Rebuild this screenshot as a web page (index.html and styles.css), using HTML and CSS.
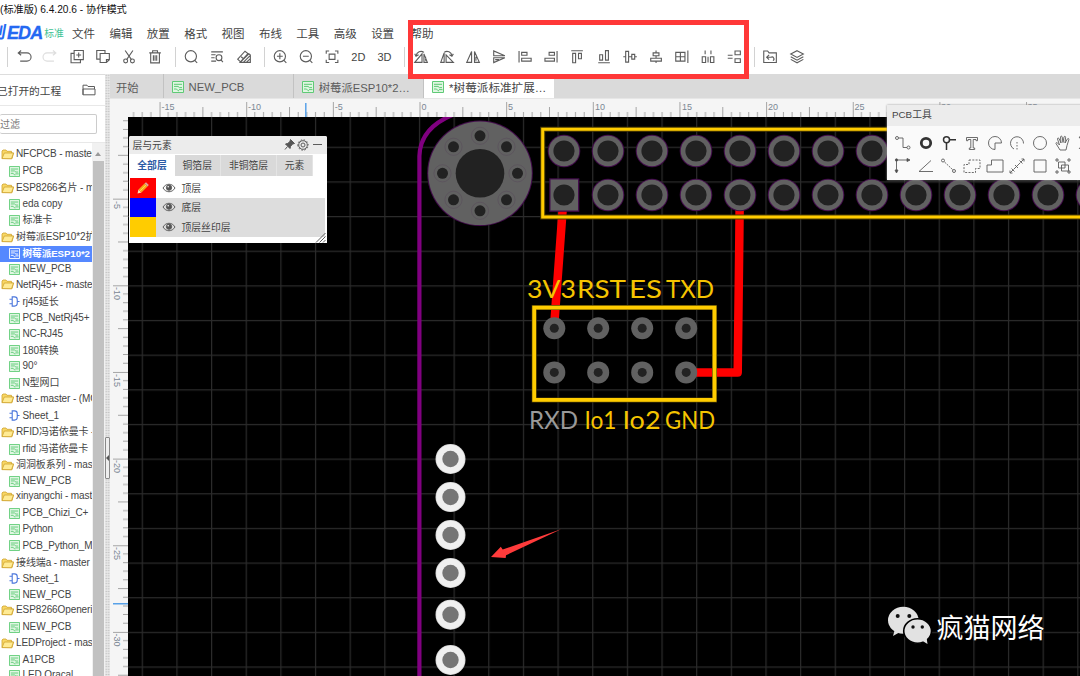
FILE: index.html
```html
<!DOCTYPE html>
<html lang="zh-CN">
<head>
<meta charset="utf-8">
<title>EDA</title>
<link rel="stylesheet" href="styles.css">
</head>
<body>
<svg class="defs" width="0" height="0">
  <symbol id="pcb" viewBox="0 0 12 12"><path class="pcb-bg" d="M.5.5h11v11H.5z"/><path d="M2 3.3h8M2 5.4h4l1.500 1.200H10M2 8h2.500l1.500 1.700h1M7 8.600h3.500"/></symbol>
  <symbol id="sheet" viewBox="0 0 12 12"><path d="M3.500 1h2.500a3 3 0 0 1 3 3v4a3 3 0 0 1-3 3H3.500zM3.500 3.500H.5M3.500 8.500H.5M9 6h2.500"/></symbol>
  <symbol id="folder" viewBox="0 0 13 11"><path d="M1 9.500V2l1-1h3l1 1.300h4.500V4H12.500l-1.500 5.700z" fill="#f8d765"/><path d="M1 9.600 3.300 4H12.500l-2 5.700z" fill="#ffeb94"/></symbol>
  <symbol id="eye" viewBox="0 0 14 10"><path d="M1 5c3-5 9-5 12 0-3 5-9 5-12 0z"/><circle cx="7" cy="4.700" r="2.600" fill="#555"/><circle cx="6.200" cy="3.800" r=".8" fill="#fff" stroke="none"/></symbol>
</svg>
<div class="app">
  <header class="header">
    <div class="title">(标准版) 6.4.20.6 - 协作模式</div>
    <nav class="menu">
      <div class="logo"><span class="logo-cut">创</span><b>EDA</b><small>标准</small></div>
      <span>文件</span><span>编辑</span><span>放置</span><span>格式</span><span>视图</span><span>布线</span><span>工具</span><span>高级</span><span>设置</span><span class="help">帮助</span>
    </nav>
    <div class="toolbar">
      <i class="sep"></i>
      <svg viewBox="0 0 16 16"><path d="M5 1.500 2 4l3 2.500M2 4h9a3.400 3.400 0 0 1 0 8.500H4"/></svg>
      <svg class="off" viewBox="0 0 16 16"><path d="m11 1.500 3 2.500-3 2.500M14 4H5a3.400 3.400 0 0 0 0 8.500h7"/></svg>
      <svg viewBox="0 0 16 16"><path d="M5 1.500h9.500V11H5zM5 4.500H1.800v9.700h9.700V11M9.700 3.700v5M7.200 6.200h5"/></svg>
      <svg viewBox="0 0 16 16"><path d="M4.500 10.500h-3v-9h8.500v3M5 4.700h9.500V11l-3 3H5zM14.500 11h-3v3"/></svg>
      <svg viewBox="0 0 16 16"><path d="m4 1.500 6.500 9.500M12 1.500 5.500 11"/><circle cx="4.500" cy="12.300" r="2"/><circle cx="11.500" cy="12.300" r="2"/></svg>
      <svg viewBox="0 0 16 16"><path d="M2 4h12M5.500 3.800v-2h5v2M3.500 4v10.300h9V4M6.300 6.500v5.500M8 6.500v5.500M9.700 6.500v5.500"/></svg>
      <i class="sep"></i>
      <svg viewBox="0 0 16 16"><circle cx="7.800" cy="7.500" r="5.800"/><path d="m11.800 11.800 2.500 2.500"/></svg>
      <svg viewBox="0 0 16 16"><path d="M2 3h12M2 6h4.500M2 9h3.500M2 12.500h5"/><circle cx="10" cy="9" r="3"/><path d="m12 11 2 2.500"/></svg>
      <svg viewBox="0 0 16 16"><path d="M1.500 10.500 9 2.300l3 2.500-7.700 8.400zM4 13.800l9-8.800 1.500 1.300v7.500zM7 14l7-7M10 14l4.500-4M5 8l3 2.600"/></svg>
      <i class="sep"></i>
      <svg viewBox="0 0 16 16"><circle cx="7.800" cy="7.500" r="5.800"/><path d="m12 11.800 2.500 2.500M7.800 4.500v6M4.800 7.500h6"/></svg>
      <svg viewBox="0 0 16 16"><circle cx="7.800" cy="7.500" r="5.800"/><path d="m12 11.800 2.500 2.500M4.800 7.500h6"/></svg>
      <svg viewBox="0 0 16 16"><path d="M2 5V2h3M11 2h3v3M14 11v3h-3M5 14H2v-3M5 5.300h6v5.400H5z"/></svg>
      <span>2D</span><span>3D</span>
      <i class="sep"></i>
      <svg viewBox="0 0 16 16"><path d="M1.500 13.800 9 5v8.800zM11 5l3.500 8.800H11zM12.700 8v4M3 7a5 5 0 0 1 8-3.500M1.500 5l1.300 2.500L5.500 6"/></svg>
      <svg viewBox="0 0 16 16"><path d="M1.500 13.800 5 4v9.800zM7 6l7.500 7.800H7zM5 3.500A5 5 0 0 1 13 7M10.500 6l2.500 1.500L14.500 5"/></svg>
      <svg viewBox="0 0 16 16"><path d="M6.500 2.500v11.300H1.500zM9.500 2.500v11.300h5zM11 8v4"/></svg>
      <svg viewBox="0 0 16 16"><path d="M2.500 2v5H14zM2.500 14V9H14zM4 11h4"/></svg>
      <svg viewBox="0 0 16 16"><path d="M1.800 2v12M4.500 3.500H10v3H4.500zM4.500 9.500h9.800v3H4.500z"/></svg>
      <svg viewBox="0 0 16 16"><path d="M14.200 2v12M6 3.500h5.500v3H6zM1.700 9.500h9.800v3H1.700z"/></svg>
      <svg viewBox="0 0 16 16"><path d="M2 1.800h12M3.500 4.500h3v9.700h-3zM9.500 4.500h3V10h-3z"/></svg>
      <svg viewBox="0 0 16 16"><path d="M2 14.200h12M3.500 6h3v5.500h-3zM9.500 1.700h3v9.800h-3z"/></svg>
      <svg viewBox="0 0 16 16"><path d="M3.500 2.500h3v11h-3zM9.800 5.500h3v5h-3zM1 8h2.500M6.500 8h3.300M12.800 8H15"/></svg>
      <svg viewBox="0 0 16 16"><path d="M5 4h6v3H5zM2.500 9.500h11v3h-11zM8 1.500V4M8 7v2.500M8 12.500v2"/></svg>
      <svg viewBox="0 0 16 16"><path d="M1.500 3.500h9.500v9H1.500zM6.300 3.500v9M1.500 8H11M14 1.500v13"/></svg>
      <svg viewBox="0 0 16 16"><path d="M2 8h3.500v6H2zM10.500 8h3.500v6h-3.500zM5 1.500v4M8 8v6M11 1.500v4"/></svg>
      <svg viewBox="0 0 16 16"><path d="M9 2h5.500v4H9zM9 10h5.500v4H9zM1.500 6.500h5M1.500 9.500h5"/></svg>
      <i class="sep"></i>
      <svg viewBox="0 0 16 16"><path d="M1.500 2h4l1.500 2h7.500v10h-13zM7 6 4.500 8.500 7 11M5 8.500h4a2 2 0 0 1 2 3.500"/></svg>
      <svg viewBox="0 0 16 16"><path d="m8 1.700 6.500 3.500L8 8.700 1.500 5.200zM1.500 8 8 11.500 14.500 8M1.500 10.700 8 14.200l6.500-3.500"/></svg>
    </div>
  </header>
  <div class="body">
    <aside class="side">
      <div class="side-head"><span>已打开的工程</span>
        <svg width="14" height="12" viewBox="0 0 14 12"><path d="M1 10.800V1.200h4l1 1.300h6.500V5M1 5h12v5.800H1z"/></svg></div>
      <div class="filter"><div class="input">过滤</div></div>
      <div class="tree-wrap">
        <ul class="tree">
          <li class="f"><svg><use href="#folder"/></svg>NFCPCB - master</li>
          <li><svg><use href="#pcb"/></svg>PCB</li>
          <li class="f"><svg><use href="#folder"/></svg>ESP8266名片 - m</li>
          <li><svg><use href="#pcb"/></svg>eda copy</li>
          <li><svg><use href="#pcb"/></svg>标准卡</li>
          <li class="f"><svg><use href="#folder"/></svg>树莓派ESP10*2扩</li>
          <li class="sel"><svg><use href="#pcb"/></svg>树莓派ESP10*2</li>
          <li><svg><use href="#pcb"/></svg>NEW_PCB</li>
          <li class="f"><svg><use href="#folder"/></svg>NetRj45+ - master</li>
          <li class="s"><svg><use href="#sheet"/></svg>rj45延长</li>
          <li><svg><use href="#pcb"/></svg>PCB_NetRj45+</li>
          <li><svg><use href="#pcb"/></svg>NC-RJ45</li>
          <li><svg><use href="#pcb"/></svg>180转换</li>
          <li><svg><use href="#pcb"/></svg>90°</li>
          <li><svg><use href="#pcb"/></svg>N型网口</li>
          <li class="f"><svg><use href="#folder"/></svg>test - master - (MC</li>
          <li class="s"><svg><use href="#sheet"/></svg>Sheet_1</li>
          <li class="f"><svg><use href="#folder"/></svg>RFID冯诺依曼卡 -</li>
          <li><svg><use href="#pcb"/></svg>rfid 冯诺依曼卡</li>
          <li class="f"><svg><use href="#folder"/></svg>洞洞板系列 - mas</li>
          <li><svg><use href="#pcb"/></svg>NEW_PCB</li>
          <li class="f"><svg><use href="#folder"/></svg>xinyangchi - mast</li>
          <li><svg><use href="#pcb"/></svg>PCB_Chizi_C+</li>
          <li><svg><use href="#pcb"/></svg>Python</li>
          <li><svg><use href="#pcb"/></svg>PCB_Python_M</li>
          <li class="f"><svg><use href="#folder"/></svg>接线端a - master</li>
          <li class="s"><svg><use href="#sheet"/></svg>Sheet_1</li>
          <li><svg><use href="#pcb"/></svg>NEW_PCB</li>
          <li class="f"><svg><use href="#folder"/></svg>ESP8266Openeri</li>
          <li><svg><use href="#pcb"/></svg>NEW_PCB</li>
          <li class="f"><svg><use href="#folder"/></svg>LEDProject - mas</li>
          <li><svg><use href="#pcb"/></svg>A1PCB</li>
          <li><svg><use href="#pcb"/></svg>LED Oracal</li>
        </ul>
        <div class="scroll"><i class="up"></i><i class="thumb"></i></div>
      </div>
    </aside>
    <div class="splitter"><i></i></div>
    <main class="main">
      <div class="tabs">
        <div class="tab start">开始</div>
        <div class="tab"><svg><use href="#pcb"/></svg>NEW_PCB</div>
        <div class="tab"><svg><use href="#pcb"/></svg>树莓派ESP10*2…</div>
        <div class="tab active"><svg><use href="#pcb"/></svg>*树莓派标准扩展…</div>
      </div>
      <div class="work">
        <svg class="stage" width="970" height="577" viewBox="110 99 970 577">
          <defs>
            <pattern id="hticks" x="419.500" y="99" width="86.650" height="18" patternUnits="userSpaceOnUse">
              <path class="tick" d="M.5 3v15M8.660 13v5M17.330 13v5M26 13v5M34.660 13v5M43.320 8v10M52 13v5M60.660 13v5M69.320 13v5M78 13v5"/>
            </pattern>
            <pattern id="vticks" x="110" y="112" width="18" height="86.650" patternUnits="userSpaceOnUse">
              <path class="tick" d="M3 .5h15M13 8.660h5M13 17.330h5M13 26h5M13 34.660h5M8 43.320h10M13 52h5M13 60.660h5M13 69.320h5M13 78h5"/>
            </pattern>
            <pattern id="grid" x="418.900" y="146.700" width="34.650" height="34.650" patternUnits="userSpaceOnUse">
              <path d="M.6 0v34.650M0 .6h34.650" stroke="#2b2b2b" stroke-width="1.200"/>
            </pattern>
            <g id="pad"><circle r="16.300" fill="#430c4c"/><circle r="15.300" fill="#616161"/><circle r="10.600" fill="#222"/></g>
            <g id="via"><circle r="11" fill="#616161"/><circle r="4.500" fill="#222"/></g>
            <g id="hole"><circle r="8.600" fill="none" stroke="#5a505c" stroke-width=".7"/><circle r="5.500" fill="#222"/></g>
            <g id="wpad"><circle r="15" fill="#d5d5d5"/><circle r="14.200" fill="#f0f0f0"/><circle r="8.200" fill="#757575"/></g>
          </defs>
          <rect x="110" y="99" width="970" height="577" fill="#f5f5f5"/>
          <rect x="132" y="99" width="948" height="18" fill="url(#hticks)"/>
          <rect x="110" y="120" width="18" height="556" fill="url(#vticks)"/>
          <path d="M305.800 103v14M113 603.700h15" stroke="#58a1e8" stroke-width="1.500"/>
          <g class="nums">
            <text x="161.500" y="110">-15</text><text x="248" y="110">-10</text><text x="334.700" y="110">-5</text><text x="421.500" y="110">0</text><text x="508" y="110">5</text><text x="595" y="110">10</text><text x="682" y="110">15</text><text x="768" y="110">20</text><text x="854.500" y="110">25</text><text x="941" y="110">30</text><text x="1027.500" y="110">35</text>
            <text transform="translate(114 201) rotate(90)">-5</text><text transform="translate(114 287) rotate(90)">-10</text><text transform="translate(114 374) rotate(90)">-15</text><text transform="translate(114 460) rotate(90)">-20</text><text transform="translate(114 547) rotate(90)">-25</text><text transform="translate(114 633.500) rotate(90)">-30</text>
          </g>
          <svg x="128" y="117" width="952" height="559" viewBox="128 117 952 559">
            <rect x="128" y="117" width="952" height="559" fill="#000"/>
            <rect x="128" y="117" width="952" height="559" fill="url(#grid)"/>
            <path d="M419.400 680V156C420 138 431 123 455 114" fill="none" stroke="#800080" stroke-width="4.200"/>
            <g transform="translate(480 173.300)">
              <circle r="52.800" fill="#430c4c"/><circle r="51.800" fill="#616161"/><circle r="24.300" fill="#222"/>
              <use href="#hole" x="37.500"/><use href="#hole" x="-37.500"/><use href="#hole" y="37.500"/><use href="#hole" y="-37.500"/>
              <use href="#hole" x="26.500" y="26.500"/><use href="#hole" x="-26.500" y="26.500"/><use href="#hole" x="26.500" y="-26.500"/><use href="#hole" x="-26.500" y="-26.500"/>
            </g>
            <g fill="none" stroke="red" stroke-width="8.500" stroke-linecap="round" stroke-linejoin="round">
              <path d="M563 205 554 328"/><path d="M739.700 200 739.300 240 737.700 372.400H690"/>
            </g>
            <path d="M1100 129.300H542.700V217H1100M534.200 307.600h180.300v92.300H534.200z" fill="none" stroke="#4d3d00" stroke-width="5"/>
            <path d="M1100 129.300H542.700V217H1100" fill="none" stroke="#fc0" stroke-width="3"/>
            <rect x="534.200" y="307.600" width="180.300" height="92.300" fill="none" stroke="#fc0" stroke-width="3.800"/>
            <use href="#pad" x="564" y="151"/><use href="#pad" x="608" y="151"/><use href="#pad" x="652" y="151"/><use href="#pad" x="696" y="151"/><use href="#pad" x="740" y="151"/><use href="#pad" x="784" y="151"/><use href="#pad" x="828" y="151"/><use href="#pad" x="872" y="151"/>
            <rect x="549.300" y="178.300" width="30" height="33.500" fill="#430c4c"/><rect x="550.500" y="179.500" width="27.500" height="31" fill="#616161"/><circle cx="564" cy="195" r="10.600" fill="#222"/>
            <use href="#pad" x="608" y="195"/><use href="#pad" x="652" y="195"/><use href="#pad" x="696" y="195"/><use href="#pad" x="740" y="195"/><use href="#pad" x="784" y="195"/><use href="#pad" x="828" y="195"/><use href="#pad" x="872" y="195"/><use href="#pad" x="916" y="195"/><use href="#pad" x="960" y="195"/><use href="#pad" x="1004" y="195"/><use href="#pad" x="1048" y="195"/><use href="#pad" x="1092" y="195"/>
            <use href="#via" x="554.300" y="328.300"/><use href="#via" x="598.200" y="328.300"/><use href="#via" x="642.200" y="328.300"/><use href="#via" x="686.200" y="328.300"/>
            <use href="#via" x="554.300" y="372.400"/><use href="#via" x="598.200" y="372.400"/><use href="#via" x="642.200" y="372.400"/><use href="#via" x="686.200" y="372.400"/>
            <g class="silk">
              <text x="527" y="297.500" textLength="49" lengthAdjust="spacingAndGlyphs">3V3</text><text x="577" y="297.500" textLength="49" lengthAdjust="spacingAndGlyphs">RST</text><text x="629" y="297.500" textLength="33" lengthAdjust="spacingAndGlyphs">ES</text><text x="666" y="297.500" textLength="48" lengthAdjust="spacingAndGlyphs">TXD</text>
              <text class="gray" x="529" y="429.200" textLength="49" lengthAdjust="spacingAndGlyphs">RXD</text><text x="584.500" y="429.200" textLength="32" lengthAdjust="spacingAndGlyphs">Io1</text><text x="622.500" y="429.200" textLength="38" lengthAdjust="spacingAndGlyphs">Io2</text><text x="665" y="429.200" textLength="50" lengthAdjust="spacingAndGlyphs">GND</text>
            </g>
            <use href="#wpad" x="450.500" y="459"/><use href="#wpad" x="450.500" y="497"/><use href="#wpad" x="450.500" y="535"/><use href="#wpad" x="450.500" y="573"/><use href="#wpad" x="450.500" y="614.700"/><use href="#wpad" x="450.500" y="660"/>
            <path d="M491 556.900 500.800 546.700 502.700 549.500 561 529.300 506 555.300 505.700 558z" fill="#ff3b3b"/>
            <g fill="#e2e2e2">
              <path d="M895 629l-2 7 7-4z"/>
              <ellipse cx="903.300" cy="620.300" rx="15.300" ry="13.500"/>
              <ellipse cx="917.600" cy="631" rx="13.900" ry="12.300" stroke="#000" stroke-width="1.600"/>
              <path d="M921 640l6.500 4-1-7z"/>
              <g fill="#111"><circle cx="897.700" cy="616" r="2"/><circle cx="909.300" cy="616" r="2"/><circle cx="913" cy="627" r="1.700"/><circle cx="922.300" cy="627" r="1.700"/></g>
            </g>
            <text class="mark" x="936.500" y="637.500">疯猫网络</text>
          </svg>
        </svg>
        <section class="layers">
          <div class="panel-head"><span>层与元素</span>
            <svg width="44" height="14" viewBox="0 0 44 14"><path d="m7.500 1.500 4 4-2 .5-2 2.500-.5 2L2.500 6l2.300-.6L7 3.500zM4.500 8.500 2 11.500" fill="#555" stroke="#555"/><circle cx="20" cy="7" r="4.300"/><circle cx="20" cy="7" r="2"/><path stroke-dasharray="1.500 1.600" d="M14.800 7a5.200 5.200 0 1 0 10.400 0 5.200 5.200 0 1 0-10.400 0"/><path d="M30 6.500h9"/></svg></div>
          <div class="layer-tabs"><b>全部层</b><span>铜箔层</span><span>非铜箔层</span><span>元素</span></div>
          <div class="layer on"><i class="red"><svg width="14" height="14" viewBox="0 0 14 14"><path d="m1.500 12.500 1-4L5.500 11.500z" fill="#fde0b0"/><path d="M2.500 8.500 8.500 2.500l3 3-6 6z" fill="#f5a81c"/><path d="m8.500 2.500 1.500-1.300 2.800 2.800-1.300 1.500z" fill="#dba79a"/><path d="m4 10 6-6" stroke="#ffd84f"/></svg></i><svg class="eye"><use href="#eye"/></svg>顶层</div>
          <div class="layer"><i class="blue"></i><svg class="eye"><use href="#eye"/></svg>底层</div>
          <div class="layer"><i class="gold"></i><svg class="eye"><use href="#eye"/></svg>顶层丝印层</div>
          <svg class="grip" width="11" height="11" viewBox="0 0 11 11"><path d="M1 10.500 10.500 1M4.500 10.500l6-6M8 10.500 10.500 8"/></svg>
        </section>
        <section class="tools">
          <div class="panel-head">PCB工具</div>
          <div class="tool-grid">
            <svg viewBox="0 0 18 18"><circle cx="3" cy="4" r="1.500"/><circle cx="14.500" cy="13.500" r="1.500"/><path d="M4.500 4h4.500v9.500h4"/></svg>
            <svg viewBox="0 0 18 18"><circle cx="9" cy="9" r="4.700" stroke="#333" stroke-width="2.800"/></svg>
            <svg viewBox="0 0 18 18"><g stroke="#333" stroke-width="1.500"><circle cx="6.500" cy="5.800" r="3"/><path d="M9.500 5.800H16M6.500 9v7"/></g></svg>
            <svg viewBox="0 0 18 18"><path d="M3.500 3.500h11v3.200h-1.500V5.500H10.200v8.500h1.500v1.500H6.300V14h1.500V5.500H5v1.200H3.500z"/></svg>
            <svg viewBox="0 0 18 18"><path d="M15.500 9A6.500 6.500 0 1 0 9 15.500V9z"/></svg>
            <svg viewBox="0 0 18 18"><path d="M6 15A6.500 6.500 0 1 1 15.500 9.500"/><path stroke-dasharray="1.500 1.500" d="M9 8v8"/></svg>
            <svg viewBox="0 0 18 18"><circle cx="9" cy="9" r="6.500"/></svg>
            <svg viewBox="0 0 18 18"><path d="M6 16 2 9.500c0-1.300 1.200-1.200 2 0L5.500 11 3.500 5c0-1.500 1.400-1.200 1.800 0L7 9 6.500 3c.3-1.400 1.500-1 1.700 0L9 8.500 10 3c.5-1.200 1.600-.8 1.600.3L11 9l2.500-4.200c1-.8 1.700 0 1.300 1L13 11.500 12 16z"/></svg>
            <svg viewBox="0 0 18 18"><path d="M2 3l5 6-5 6M2 3h10"/></svg>
            <svg viewBox="0 0 18 18"><path d="M2.500 15V3H14"/><g fill="#444"><circle cx="2.500" cy="3" r="1.200"/><path d="m13 1.500 3 1.500-3 1.500zM1 13l1.500 3L4 13z"/></g></svg>
            <svg viewBox="0 0 18 18"><path d="M14 3.500 2 14.500h14"/></svg>
            <svg viewBox="0 0 18 18"><circle cx="3" cy="3.500" r="1.500"/><circle cx="14" cy="14" r="1.500"/><path stroke-dasharray="2 1" d="m4.500 5 8 7.500"/></svg>
            <svg viewBox="0 0 18 18"><path stroke-dasharray="2 1.300" d="M6 3h11v8.500h-4.500v4H1v-8h5z"/></svg>
            <svg viewBox="0 0 18 18"><path d="M5.500 3H17v12H1V8h4.500z"/></svg>
            <svg viewBox="0 0 18 18"><path d="m3.500 11.500 3 3M11.500 3.500l3 3M5.500 12.500l7-7M7 8l3 3M2 16l3-3M2 13.500V16h2.500M13 5l3-3M13.500 2H16v2.500"/></svg>
            <svg viewBox="0 0 18 18"><path d="M3 3h12v12H3z"/></svg>
            <svg viewBox="0 0 18 18"><path d="M4.500 5H11v6H4.500zM7.500 8h7v6h-7z"/><path d="M2 2h2v2H2zM14 2h2v2h-2zM2 14h2v2H2zM14 14h2v2h-2z"/></svg>
          </div>
        </section>
      </div>
    </main>
  </div>
  <div class="highlight"></div>
</div>
</body>
</html>
```

FILE: styles.css
```css
* { box-sizing: border-box; }
body { margin: 0; background: #fff; color: #444; font-family: "Liberation Sans", "Noto Sans CJK SC", sans-serif; }
svg { fill: none; stroke: #5c5c5c; stroke-width: 1; flex: none; }
.defs { position: absolute; }
.app { position: relative; width: 1080px; height: 676px; overflow: hidden; display: flex; flex-direction: column; white-space: nowrap; }
.header { height: 74px; flex: none; }
.title { height: 20px; line-height: 19px; font-size: 10.2px; color: #111; }
.menu { height: 25px; display: flex; align-items: center; font-size: 11.5px; }
.menu > span { width: 37.400px; flex: none; }
.menu .help { padding-left: 2px; }
.logo { width: 72px; flex: none; display: flex; align-items: center; color: #2468f2; overflow: hidden; }
.logo-cut { margin-left: -11px; width: 18px; font-size: 17px; line-height: 24px; font-weight: bold; transform: skewX(-10deg); }
.logo b { font-size: 18px; font-style: italic; letter-spacing: -.9px; line-height: 24px; -webkit-text-stroke: .3px #2468f2; }
.logo small { font-size: 9.800px; color: #3fc395; margin-left: 2px; }
.toolbar { height: 24px; display: flex; align-items: center; }
.toolbar > svg { width: 26.100px; height: 15.500px; stroke-width: 1.150; }
.toolbar > .off { opacity: .2; }
.toolbar > span { width: 26.100px; text-align: center; font-size: 11px; flex: none; }
.sep { width: 10.400px; height: 20px; flex: none; padding-left: 7px; }
.sep::before { content: ""; display: block; width: 1px; height: 20px; background: #d2d2d2; }
.sep:first-child { width: 11.400px; }

.body { display: flex; flex: 1; min-height: 0; }
.side { width: 105px; flex: none; display: flex; flex-direction: column; border-top: 1px solid #ddd; }
.side-head { height: 31px; flex: none; border-bottom: 1px solid #e8e8e8; display: flex; align-items: center; justify-content: space-between; padding-right: 9px; font-size: 10.700px; }
.side-head span { margin-left: -3px; }
.filter { height: 37px; flex: none; border-bottom: 1px solid #e8e8e8; padding: 8px 8px 0 0; }
.input { height: 20px; border: 1px solid #ccc; border-left: 0; border-radius: 2px; font-size: 10px; line-height: 20px; color: #777; }
.tree-wrap { flex: 1; min-height: 0; display: flex; }
.tree { margin: 0; padding: 3px 0 0; width: 91.500px; overflow: hidden; list-style: none; font-size: 10px; letter-spacing: -.1px; display: grid; align-content: start;
  grid-template-rows: 17px 17px 16px 16px 17px 16.500px 15.500px 15.500px 17px 16.500px 16px 16.500px 15.500px 17px 15.500px 17px 16.500px 17px 16px 16px 15px 17px 16px 16.500px 17.500px 15.500px 16px 15.500px 17px 16px 17px 15px 17px; }
.tree li { height: 16px; display: flex; align-items: center; gap: 3px; padding-left: 8.500px; line-height: 16px; min-width: 0; overflow: hidden; }
.tree li svg { width: 11px; height: 11px; stroke: #5fca76; }
.pcb-bg { fill: var(--pcb-bg, #dff6e2); }
.tree .f { padding-left: 1px; gap: 2px; }
.tree .f svg { width: 13px; height: 11px; stroke: #cfa32e; stroke-width: .8; }
.tree .s svg { stroke: #4a76dc; stroke-width: 1.2; }
.tree .sel { --pcb-bg: transparent; background: #5588ff; color: #fff; font-weight: bold; font-size: 9.700px; }
.tree .sel svg { stroke: #fff; }
.scroll { flex: 1; background: #f1f1f1; display: flex; flex-direction: column; align-items: center; padding-top: 9px; }
.up { border: 3px solid transparent; border-bottom: 4px solid #999; border-top: 0; margin-bottom: 5px; }
.thumb { width: 11px; flex: 1; background: #c1c1c1; }
.splitter { width: 5px; flex: none; background: #e8e8e8 radial-gradient(circle, #bdbdbd 0 .7px, transparent .9px) 0 0 / 2.500px 2.600px; padding-top: 363px; }
.splitter i { display: flex; align-items: center; height: 42px; border: 1px solid #888; background: #eee; border-radius: 1px; }
.splitter i::before { content: ""; border: 3px solid transparent; border-right-color: #555; border-left: 0; }

.main { flex: 1; min-width: 0; display: flex; flex-direction: column; }
.tabs { height: 25px; flex: none; background: #dadada; border-bottom: 1px solid #e6e6e6; display: flex; font-size: 11.300px; color: #5c5c5c; }
.tab { width: 130.300px; flex: none; display: flex; align-items: center; gap: 5px; padding: 2px 0 0 8px; border-right: 1px solid #c2c2c2; }
.tab.start { width: 53.500px; padding-left: 6px; }
.tab svg { width: 12px; height: 12px; stroke: #5fca76; }
.tab.active { background: #fff; color: #444; border: 0; font-size: 11.6px; }
.work { flex: 1; position: relative; overflow: hidden; }
.stage { display: block; stroke: none; }
.stage svg { stroke: none; }
.tick { stroke: #a5a5a5; stroke-width: 1; }
.nums { font-size: 9px; fill: #7b8794; }
.silk { font: 25px Lato, sans-serif; fill: #f5c400; }
.silk .gray { fill: #999; }
.mark { font: 27px "Noto Sans CJK SC", sans-serif; fill: #fff; }

.layers, .tools { position: absolute; font-size: 9.800px; }
.layers { left: 18.500px; top: 36.500px; width: 198px; height: 107px; background: #fff; border-radius: 2px 2px 0 0; padding: 0 2px 0 1px; }
.panel-head { height: 18.500px; background: #ececec; display: flex; align-items: center; justify-content: space-between; padding: 0 0 0 4px; margin: 0 -2px 0 -1px; color: #444; border-radius: 2px 2px 0 0; }
.layer-tabs { display: flex; height: 22px; line-height: 21px; margin-bottom: 2px; padding-top: 1px; text-align: center; }
.layer-tabs b { width: 45px; color: #2c5ba5; }
.layer-tabs span { width: 46.500px; background: #d9d9d9; border-right: 1px solid #e4e4e4; }
.layer-tabs span:nth-child(3) { width: 56px; }
.layer-tabs span:nth-child(4) { width: 36px; }
.layer { height: 19.500px; display: flex; align-items: center; background: #ddd; }
.layer.on { background: #fff; }
.layer i { width: 26px; height: 100%; display: grid; place-items: center; }
.layer i svg { stroke: none; }
.red { background: red; }
.blue { background: blue; }
.gold { background: #fc0; }
.eye { width: 14px; height: 10px; margin: 0 6px; }
.grip { position: absolute; right: 1px; bottom: 0; }
.tools { left: 777px; top: 5.500px; width: 210px; height: 75.500px; background: #fafafa; box-shadow: 0 0 2px #999; }
.tools .panel-head { height: 21px; padding: 0 0 2px 5px; margin: 0; border-radius: 0; }
.tool-grid { display: grid; grid-template-columns: repeat(9, 22.900px); grid-auto-rows: 23px; padding: 6px 0 0 4.500px; align-items: center; justify-items: center; }
.tool-grid svg { width: 18px; height: 18px; stroke-width: .9; }
.highlight { position: absolute; left: 408px; top: 20px; width: 341px; height: 59px; border: 5.500px solid #ff3838; }
```
